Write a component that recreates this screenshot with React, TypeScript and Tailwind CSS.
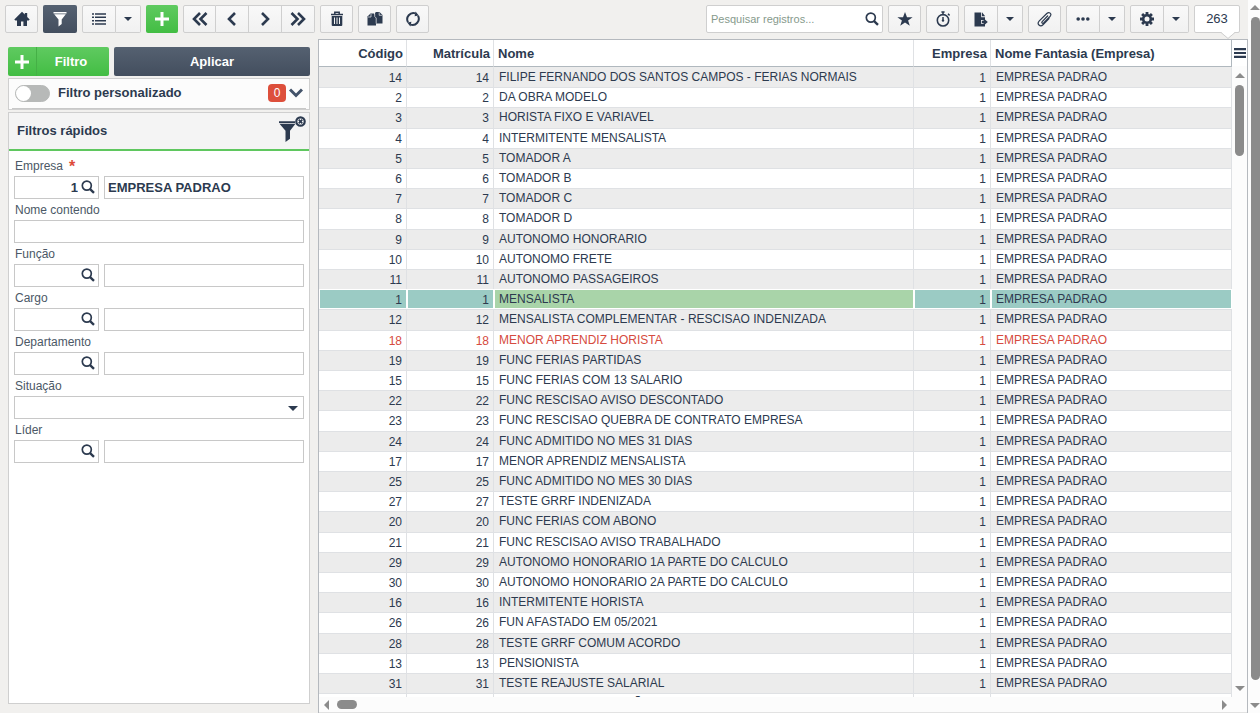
import React, { useState } from 'react';

interface Employee {
  id: number;
  name: string;
  company?: string;
  dismissed?: boolean;
}

const employees: Employee[] = [
  { id: 14, name: 'FILIPE FERNANDO DOS SANTOS CAMPOS - FERIAS NORMAIS' },
  { id: 2, name: 'DA OBRA MODELO' },
  { id: 3, name: 'HORISTA FIXO E VARIAVEL' },
  { id: 4, name: 'INTERMITENTE MENSALISTA' },
  { id: 5, name: 'TOMADOR A' },
  { id: 6, name: 'TOMADOR B' },
  { id: 7, name: 'TOMADOR C' },
  { id: 8, name: 'TOMADOR D' },
  { id: 9, name: 'AUTONOMO HONORARIO' },
  { id: 10, name: 'AUTONOMO FRETE' },
  { id: 11, name: 'AUTONOMO PASSAGEIROS' },
  { id: 1, name: 'MENSALISTA' },
  { id: 12, name: 'MENSALISTA COMPLEMENTAR - RESCISAO INDENIZADA' },
  { id: 18, name: 'MENOR APRENDIZ HORISTA', dismissed: true },
  { id: 19, name: 'FUNC FERIAS PARTIDAS' },
  { id: 15, name: 'FUNC FERIAS COM 13 SALARIO' },
  { id: 22, name: 'FUNC RESCISAO AVISO DESCONTADO' },
  { id: 23, name: 'FUNC RESCISAO QUEBRA DE CONTRATO EMPRESA' },
  { id: 24, name: 'FUNC ADMITIDO NO MES 31 DIAS' },
  { id: 17, name: 'MENOR APRENDIZ MENSALISTA' },
  { id: 25, name: 'FUNC ADMITIDO NO MES 30 DIAS' },
  { id: 27, name: 'TESTE GRRF INDENIZADA' },
  { id: 20, name: 'FUNC FERIAS COM ABONO' },
  { id: 21, name: 'FUNC RESCISAO AVISO TRABALHADO' },
  { id: 29, name: 'AUTONOMO HONORARIO 1A PARTE DO CALCULO' },
  { id: 30, name: 'AUTONOMO HONORARIO 2A PARTE DO CALCULO' },
  { id: 16, name: 'INTERMITENTE HORISTA' },
  { id: 26, name: 'FUN AFASTADO EM 05/2021' },
  { id: 28, name: 'TESTE GRRF COMUM ACORDO' },
  { id: 13, name: 'PENSIONISTA' },
  { id: 31, name: 'TESTE REAJUSTE SALARIAL' },
  { id: 32, name: 'TESTE CALCULO PENSÃO' }
];

type IconProps = { className?: string };

const HomeIcon = () => (
  <svg viewBox="0 0 16 16" className="w-4 h-4" fill="currentColor">
    <path d="M8 .8.3 8.5l1 1H3V15h4v-4.500h2.400V15H13V9.500h1.700l1-1L13.200 6V2h-2.400v1.600z" />
  </svg>
);

const FunnelIcon = ({ className }: IconProps) => (
  <svg viewBox="0 0 14 16" className={className} fill="currentColor">
    <path d="M.5 1h13v1.400H.5zM1.200 3.200h11.600L8.700 8.400V13l-3.200 2.600V8.400z" />
  </svg>
);

const ListIcon = () => (
  <svg viewBox="0 0 16 14" className="w-4 h-3.5" stroke="currentColor" strokeWidth="1.4">
    <path d="M1 2h2M4 2h11M1 5.300h2M4 5.300h11M1 8.700h2M4 8.700h11M1 12h2M4 12h11" />
  </svg>
);

const PlusIcon = () => (
  <svg viewBox="0 0 14 14" className="w-3.5 h-3.5" stroke="currentColor" strokeWidth="3">
    <path d="M7 0v14M0 7h14" />
  </svg>
);

const Caret = () => (
  <svg viewBox="0 0 8 4" className="w-2 h-1" fill="currentColor">
    <path d="M0 0h8L4 4z" />
  </svg>
);

const ChevronIcon = ({ d }: { d: string }) => (
  <svg viewBox="0 0 16 14" className="w-4 h-3.5" fill="none" stroke="currentColor" strokeWidth="2.6">
    <path d={d} />
  </svg>
);

const TrashIcon = () => (
  <svg viewBox="0 0 14 16" className="w-3.5 h-4">
    <path d="M1 3.500h12M4.800 3V1.300h4.400V3" fill="none" stroke="currentColor" strokeWidth="1.5" />
    <path d="M1.700 5h10.600v9q0 1-1 1H2.700q-1 0-1-1z" fill="currentColor" />
    <path d="M4.500 6.500v6.500M7 6.500v6.500M9.500 6.500v6.500" stroke="#f4f4f4" />
  </svg>
);

const CopyIcon = () => (
  <svg viewBox="0 0 16 14" className="w-4 h-3.5" fill="currentColor">
    <path d="M3.500 1.500H7L9 4v9.500H.5v-9z" />
    <path d="M9 0h3.500l3 3v8.500H8V1z" />
    <path d="M4 2v3H1M12.200.5v2.800h3M7.700 1.500v3L9.200 6v5.500" fill="none" stroke="#f4f4f4" strokeWidth=".7" />
  </svg>
);

const RefreshIcon = () => (
  <svg viewBox="0 0 16 16" className="w-4 h-4">
    <path d="M3 11.200A6.200 6.200 0 0 1 10.500 2.400M13 4.800A6.200 6.200 0 0 1 5.500 13.600" fill="none" stroke="currentColor" strokeWidth="2" />
    <path d="M9.600 5.200 13.800 4.600 10.600.6zM6.400 10.800 2.200 11.400l3.200 4z" fill="currentColor" />
  </svg>
);

const SearchIcon = () => (
  <svg viewBox="0 0 14 14" className="w-3.5 h-3.5 text-[#2c3a4f]" fill="none" stroke="currentColor">
    <circle cx="5.8" cy="5.6" r="4.5" strokeWidth="1.7" />
    <path d="m8.800 8.800 4.200 4" strokeWidth="2.4" />
  </svg>
);

const StarIcon = () => (
  <svg viewBox="0 0 16 14" className="w-4 h-3.5" fill="currentColor">
    <path d="m8 0 2 5.200h5.600l-4.500 3.300 1.700 5.300L8 10.600l-4.800 3.200 1.700-5.300L.4 5.200H6z" />
  </svg>
);

const TimerIcon = () => (
  <svg viewBox="0 0 14 16" className="w-3.5 h-4" fill="none" stroke="currentColor">
    <circle cx="7" cy="9.3" r="5.7" strokeWidth="1.6" />
    <path d="M5.400 1h3.200M7 1v2.600M7 6v4M12 2.800l1.600 1.600" strokeWidth="1.5" />
    <circle cx="7" cy="9.6" r="1.2" fill="currentColor" stroke="none" />
  </svg>
);

const ExportIcon = () => (
  <svg viewBox="0 0 14 15" className="w-3.5 h-[15px]" fill="currentColor">
    <path d="M.5.5h6.700v4.800H11V8H7v3.800h4v2.700H.5z" />
    <path d="M8 .3 11.200 4.300H8zM7.800 8.800h1.800V6.200l4.200 3.800-4.200 3.800V11H7.800z" />
  </svg>
);

const ClipIcon = () => (
  <svg viewBox="0 0 16 16" className="w-4 h-4" fill="none" stroke="currentColor" strokeWidth="1.2" strokeLinecap="round">
    <path d="m10.600 5-5.400 5.600c-1 1.100.3 2.300 1.400 1.300L13 5.500c2.300-2.600-.8-5.300-3.200-3L2.300 9.800c-3 3.200.9 6.600 3.700 3.900l6-6" />
  </svg>
);

const DotsIcon = () => (
  <svg viewBox="0 0 14 4" className="w-3.5 h-1" fill="currentColor">
    <circle cx="2.2" cy="2" r="1.8" />
    <circle cx="7" cy="2" r="1.8" />
    <circle cx="11.8" cy="2" r="1.8" />
  </svg>
);

const GearIcon = () => (
  <svg viewBox="0 0 14 14" className="w-3.5 h-3.5" fill="none" stroke="currentColor">
    <circle cx="7" cy="7" r="3.8" strokeWidth="2.6" />
    <path d="M7 0v3M7 11v3M0 7h3M11 7h3M2.100 2.100l2 2M9.900 9.900l2 2M2.100 11.900l2-2M9.900 4.100l2-2" strokeWidth="2.8" />
  </svg>
);

const box = 'border border-[#cfcfcf] bg-linear-to-b from-[#f9f9f9] to-[#f1f1f1]';

interface ToolProps {
  label: string;
  className?: string;
  children: React.ReactNode;
}

function Tool({ label, className = `${box} w-[33px] rounded-xs`, children }: ToolProps) {
  return (
    <button aria-label={label} title={label} className={`${className} h-7 shrink-0 flex items-center justify-center`}>
      {children}
    </button>
  );
}

// Main action on the left, its drop-down arrow on the right
function SplitTool({ label, children }: ToolProps) {
  return (
    <div className="flex shrink-0">
      <Tool label={label} className={`${box} w-[34px] rounded-l-xs`}>{children}</Tool>
      <Tool label={`${label}: opções`} className={`${box} w-[25px] rounded-r-xs border-l-0`}><Caret /></Tool>
    </div>
  );
}

function Toolbar() {
  return (
    <header className="flex items-center gap-[5px] pl-[5px] pr-2 pt-[5px] pb-1.5">
      <Tool label="Início"><HomeIcon /></Tool>
      <Tool label="Filtros" className="w-[34px] rounded-xs bg-linear-to-b from-[#556171] to-[#434e5e] text-white">
        <FunnelIcon className="w-3.5 h-4" />
      </Tool>
      <SplitTool label="Lista"><ListIcon /></SplitTool>
      <Tool label="Novo" className="w-8 rounded-xs bg-linear-to-b from-[#5fca60] to-[#42bd43] text-white">
        <PlusIcon />
      </Tool>
      <div className="flex shrink-0">
        <Tool label="Primeiro" className={`${box} w-[33px] rounded-l-xs`}><ChevronIcon d="M8 1 2 7l6 6M14.500 1l-6 6 6 6" /></Tool>
        <Tool label="Anterior" className={`${box} w-[33px] border-l-0`}><ChevronIcon d="m11 1-6 6 6 6" /></Tool>
        <Tool label="Próximo" className={`${box} w-[33px] border-l-0`}><ChevronIcon d="m5 1 6 6-6 6" /></Tool>
        <Tool label="Último" className={`${box} w-[33px] rounded-r-xs border-l-0`}><ChevronIcon d="m1.500 1 6 6-6 6M8 1l6 6-6 6" /></Tool>
      </div>
      <Tool label="Excluir"><TrashIcon /></Tool>
      <Tool label="Copiar"><CopyIcon /></Tool>
      <Tool label="Atualizar"><RefreshIcon /></Tool>

      <div className="ml-auto flex items-center w-[177px] h-7 pl-1 pr-[3px] border border-[#cfcfcf] rounded-xs bg-white">
        <input
          type="search"
          aria-label="Pesquisar registros"
          placeholder="Pesquisar registros..."
          className="min-w-0 flex-1 text-[11px] outline-none placeholder:text-[#869a8c]"
        />
        <button aria-label="Pesquisar"><SearchIcon /></button>
      </div>
      <Tool label="Favoritos"><StarIcon /></Tool>
      <Tool label="Histórico"><TimerIcon /></Tool>
      <SplitTool label="Exportar"><ExportIcon /></SplitTool>
      <Tool label="Anexos"><ClipIcon /></Tool>
      <SplitTool label="Mais"><DotsIcon /></SplitTool>
      <SplitTool label="Configurações"><GearIcon /></SplitTool>
      <div className="relative flex items-center justify-center w-[46px] h-7 border border-[#cfcfcf] rounded-xs bg-white text-[13px]">
        263
        <svg viewBox="0 0 14 7" className="absolute right-1 top-[26px] w-3.5 h-[7px]">
          <path d="M0 0h14L7 6z" fill="#fff" />
          <path d="m0 .5 7 6 7-6" fill="none" stroke="#cfcfcf" />
        </svg>
      </div>
    </header>
  );
}

const inputStyle = 'h-[23px] min-w-0 border border-[#c8c8c8] bg-white px-[3px] text-[13px] font-bold outline-none';
const labelStyle = 'block h-[21px] pl-px leading-[23px] text-[#4b5866]';

interface LookupProps {
  id: string;
  label: string;
  code?: string;
  description?: string;
  required?: boolean;
}

function LookupField({ id, label, code = '', description = '', required }: LookupProps) {
  return (
    <div>
      <label htmlFor={id} className={labelStyle}>
        {label}
        {required && <span className="ml-1.5 text-base leading-none align-text-top font-bold text-[#dd4b39]">*</span>}
      </label>
      <div className="flex gap-[5px]">
        <div className="flex items-center w-[85px] h-[23px] border border-[#c8c8c8] bg-white pr-[3px]">
          <input id={id} defaultValue={code} className="min-w-0 flex-1 pr-[3px] text-right text-[13px] font-bold outline-none" />
          <button aria-label={`Buscar ${label}`} className="pb-0.5"><SearchIcon /></button>
        </div>
        <input aria-label={`${label}: descrição`} defaultValue={description} className={`${inputStyle} flex-1`} />
      </div>
    </div>
  );
}

function FilterSidebar() {
  const [custom, setCustom] = useState(false);

  return (
    <aside className="w-[302px] shrink-0 flex flex-col pt-2 pb-[9px]">
      <div className="flex gap-[5px] mb-[2px] h-[29px] text-[13px] font-bold text-white">
        <button className="flex items-center w-[101px] rounded-xs bg-linear-to-b from-[#5fca60] to-[#42bd43]">
          <span className="flex items-center justify-center w-[29px] h-full border-r border-[#45b046]">
            <PlusIcon />
          </span>
          <span className="flex-1 pr-1">Filtro</span>
        </button>
        <button className="flex-1 rounded-xs bg-linear-to-b from-[#556171] to-[#434e5e]">Aplicar</button>
      </div>

      <div className="mb-[2px] h-8 border border-[#cfcfcf] bg-[#fcfcfc] px-[3px]">
        <div className="flex items-center h-[30px] pb-px border-b border-[#c8c8c8]">
          <input
            id="custom-filter"
            type="checkbox"
            role="switch"
            checked={custom}
            onChange={() => setCustom(!custom)}
            className="appearance-none ml-[3px] w-[35px] h-[17px] rounded-full bg-[#b7b9b8] border border-[#b7b9b8] before:block before:w-[15px] before:h-[15px] before:rounded-full before:bg-white checked:bg-[#42bd43] checked:before:ml-auto"
          />
          <label htmlFor="custom-filter" className="ml-2 pb-px text-[13px] font-bold">Filtro personalizado</label>
          <span className="ml-auto flex items-center justify-center w-[18px] h-[18px] rounded bg-[#dd4f3b] text-xs text-white">0</span>
          <button aria-label="Expandir" className="mx-[3px]">
            <svg viewBox="0 0 14 10" className="w-3.5 h-2.5" fill="none" stroke="#43536a" strokeWidth="3">
              <path d="m1 1.500 6 6 6-6" />
            </svg>
          </button>
        </div>
      </div>

      <div className="flex-1 flex flex-col border border-[#cfcfcf] bg-white">
        <div className="flex items-center justify-between h-[38px] pl-2 pr-[3px] border-b-2 border-[#5fc75f] bg-[#f4f4f4]">
          <h2 className="text-[13px] font-bold">Filtros rápidos</h2>
          <button aria-label="Limpar filtros" className="pb-1">
            <svg viewBox="0 0 28 28" className="w-7 h-7">
              <path d="M1 6.200h16v1.700H1zM1.500 8.800h16L12 15.800v8L7.500 27V15.800z" fill="#2c3a4f" />
              <circle cx="22.5" cy="6.5" r="4.2" fill="#fff" stroke="#2c3a4f" strokeWidth="2.2" />
              <path d="m20.700 4.700 3.600 3.600M24.300 4.700l-3.600 3.600" stroke="#2c3a4f" strokeWidth="1.7" />
            </svg>
          </button>
        </div>
        <div className="flex flex-col px-[5px] pt-1 text-xs">
          <LookupField id="empresa" label="Empresa" code="1" description="EMPRESA PADRAO" required />
          <label htmlFor="nome" className={labelStyle}>Nome contendo</label>
          <input id="nome" className={inputStyle} />
          <LookupField id="funcao" label="Função" />
          <LookupField id="cargo" label="Cargo" />
          <LookupField id="departamento" label="Departamento" />
          <label htmlFor="situacao" className={labelStyle}>Situação</label>
          <div className="relative flex">
            <select id="situacao" className={`${inputStyle} flex-1 appearance-none`}>
              <option></option>
            </select>
            <svg viewBox="0 0 10 5" className="absolute right-1.5 top-2.5 w-2.5 h-[5px] pointer-events-none" fill="#2c3a4f">
              <path d="M0 0h10L5 5z" />
            </svg>
          </div>
          <LookupField id="lider" label="Líder" />
        </div>
      </div>
    </aside>
  );
}

const Arrow = ({ points }: { points: string }) => (
  <svg viewBox="0 0 10 10" className="w-2.5 h-2.5 shrink-0" fill="#8b8b8b">
    <polygon points={points} />
  </svg>
);

const numberCell = 'text-right pt-0.5';
const textCell = 'pt-px';

function EmployeeTable() {
  const [selected, setSelected] = useState(1);

  const cellColor = (emp: Employee, name = false) => {
    if (emp.id !== selected) return 'border-[#dfe1e4]';
    return `border-white shadow-[inset_1px_-1px_0_white] ${name ? 'bg-[#a9d4a9]' : 'bg-[#9bcbc4]'}`;
  };

  return (
    <section className="flex-1 min-w-0 flex flex-col border-t border-x border-[#b5b9be] bg-[#fcfcfc]">
      <div className="flex-1 min-h-0 flex">
        <div className="flex-1 min-w-0 overflow-hidden">
          <table className="w-full table-fixed border-separate border-spacing-0 text-xs whitespace-nowrap">
            <colgroup>
              <col className="w-[88px]" />
              <col className="w-[87px]" />
              <col className="w-[420px]" />
              <col className="w-[77px]" />
              <col />
            </colgroup>
            <thead className="text-[13px] bg-white">
              <tr className="h-[27px] [&>th]:border-b [&>th]:border-r [&>th]:border-r-[#dfe1e4] [&>th]:border-b-[#b0b8be] [&>th]:pt-0.5 [&>th]:pl-1 [&>th]:pr-[3px] [&>th:last-child]:border-r-[#b0b8be]">
                <th className="text-right">Código</th>
                <th className="text-right">Matrícula</th>
                <th className="text-left">Nome</th>
                <th className="text-right">Empresa</th>
                <th className="text-left">Nome Fantasia (Empresa)</th>
              </tr>
            </thead>
            <tbody className="[&>tr]:h-5 [&>tr:nth-child(5n+3)]:h-[21px] [&>tr:first-child>td]:border-t-transparent [&_td]:align-top [&_td]:leading-[17px] [&_td]:border-t [&_td]:border-r [&_td]:pl-[5px] [&_td]:pr-1">
              {employees.map((emp) => (
                <tr
                  key={emp.id}
                  onClick={() => setSelected(emp.id)}
                  className={`odd:bg-[#ececec] even:bg-white ${emp.dismissed ? 'text-[#d64b40]' : ''}`}
                >
                  <td className={`${numberCell} ${cellColor(emp)}`}>{emp.id}</td>
                  <td className={`${numberCell} ${cellColor(emp)}`}>{emp.id}</td>
                  <td className={`${textCell} ${cellColor(emp, true)}`}>{emp.name}</td>
                  <td className={`${numberCell} ${cellColor(emp)}`}>1</td>
                  <td className={`${textCell} ${cellColor(emp)}`}>{emp.company || 'EMPRESA PADRAO'}</td>
                </tr>
              ))}
            </tbody>
          </table>
        </div>
        <div className="w-[15px] shrink-0 flex flex-col items-center">
          <button aria-label="Colunas" className="w-full h-[26px] flex items-center justify-center bg-white">
            <svg viewBox="0 0 12 10" className="w-3 h-2.5" stroke="#2c3a4f" strokeWidth="2.2">
              <path d="M0 1.100h12M0 5h12M0 8.900h12" />
            </svg>
          </button>
          <div className="mt-[3px] mb-1.5 flex"><Arrow points="0,9 10,9 5,4" /></div>
          <div className="w-[9px] h-[71px] rounded-full bg-[#8b8b8b]" />
          <div className="mt-auto mb-0.5 flex"><Arrow points="0,1 10,1 5,6" /></div>
        </div>
      </div>
      <div className="flex items-center h-4 pl-[3px] pr-[18px] border-b border-[#e2e2e2]">
        <Arrow points="7,0 7,10 2,5" />
        <div className="ml-[5px] w-5 h-[9px] rounded-full bg-[#8b8b8b]" />
        <div className="ml-auto flex"><Arrow points="3,0 3,10 8,5" /></div>
      </div>
    </section>
  );
}

export default function App() {
  return (
    <div className="flex h-screen overflow-hidden bg-[#f1f0ee] font-['Liberation_Sans',Arial,sans-serif] text-[#2c3a4f]">
      <div className="flex-1 min-w-0 flex flex-col">
        <Toolbar />
        <main className="flex-1 min-h-0 flex gap-2 pl-2">
          <FilterSidebar />
          <EmployeeTable />
        </main>
      </div>
      <div className="w-3 shrink-0 flex flex-col items-end bg-[#fcfcfc] pt-[2px] pb-[3px]">
        <Arrow points="0,8 10,8 5,3" />
        <div className="mt-[5px] mb-5 flex-1 w-[9px] rounded-full bg-[#8b8b8b]" />
        <Arrow points="0,3 10,3 5,8" />
      </div>
    </div>
  );
}
